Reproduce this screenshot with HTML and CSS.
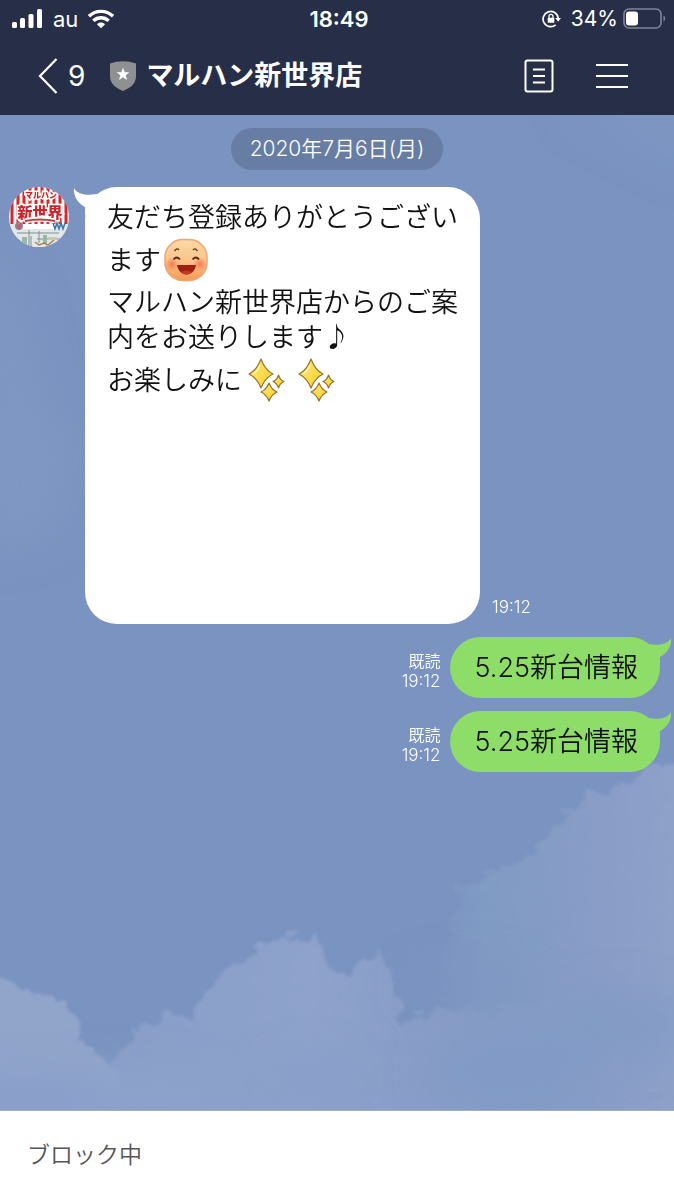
FILE: index.html
```html
<!DOCTYPE html>
<html lang="ja">
<head>
    <meta charset="UTF-8">
    <meta name="viewport" content="width=device-width, initial-scale=1.0">
    <title>マルハン新世界店</title>
    <link rel="stylesheet" href="styles.css">
</head>
<body>

    <header class="top">
        <div class="status">
            <div class="status-left">
                <svg width="31" height="20" viewBox="0 0 31 20" fill="#fff">
                    <rect x="0" y="13" width="5" height="6" rx="1.5"/>
                    <rect x="8" y="9" width="5" height="10" rx="1.5"/>
                    <rect x="16.5" y="5" width="5" height="14" rx="1.5"/>
                    <rect x="25" y="0" width="5" height="19" rx="1.5"/>
                </svg>
                <span>au</span>
                <svg width="26" height="20" viewBox="0 0 26 20" fill="none" stroke="#fff" stroke-width="3.4">
                    <path d="M1 7.2C7.8 .7 18.2 .7 25 7.2"/>
                    <path d="M5.3 11.8C9.8 7.8 16.2 7.8 20.7 11.8"/>
                    <path d="M13 19.3L8.9 15.2C11.3 13 14.7 13 17.1 15.2Z" fill="#fff" stroke="none"/>
                </svg>
            </div>
            <span class="clock">18:49</span>
            <div class="status-right">
                <svg width="19" height="18" viewBox="0 0 19 18" fill="none" stroke="#fff" stroke-width="1.7">
                    <path d="M13.7 14.8A7.6 7.6 0 1 1 16.2 8"/>
                    <path d="M13.2 8H19L16.2 11.8Z" fill="#fff" stroke="none"/>
                    <rect x="5.7" y="7.8" width="6.6" height="5" rx=".6" fill="#fff" stroke="none"/>
                    <path d="M7 8V6.4a2 2 0 0 1 4 0V8" stroke-width="1.3"/>
                </svg>
                <span class="percent">34%</span>
                <svg class="battery" width="43" height="21" viewBox="0 0 43 21">
                    <rect x="1" y="1" width="37" height="19" rx="5" fill="none" stroke="#80859a" stroke-width="1.6"/>
                    <rect x="3" y="3.5" width="12" height="14" rx="3" fill="#fff"/>
                    <path d="M40.5 7.5c2.2 1.4 2.2 4.6 0 6z" fill="#80859a"/>
                </svg>
            </div>
        </div>

        <nav class="nav">
            <a class="back" href="#" aria-label="戻る">
                <svg width="20" height="36" viewBox="0 0 20 36" fill="none" stroke="#fff" stroke-width="2.2">
                    <path d="M18.5 1L2 18L18.5 35"/>
                </svg>
                <span>9</span>
            </a>
            <svg class="shield" width="26" height="30" viewBox="0 0 26 30">
                <path d="M0 2.5Q13 -2 26 2.5V15C26 23 20 27 13 30C6 27 0 23 0 15Z" fill="#8f9091"/>
                <path d="M13 6.6L14.7 11.2L19.4 11.3L15.7 14.2L17 18.9L13 16.2L9 18.9L10.3 14.2L6.6 11.3L11.3 11.2Z" fill="#fff"/>
            </svg>
            <h1>マルハン新世界店</h1>
            <div class="actions">
                <button type="button" aria-label="ノート">
                    <svg width="30" height="34" viewBox="0 0 30 34" fill="none" stroke="#fff" stroke-width="2">
                        <rect x="1.5" y="1.5" width="27" height="31" rx="2"/>
                        <path d="M9 10.5H21M9 17H21M9 23.5H21"/>
                    </svg>
                </button>
                <button type="button" aria-label="メニュー">
                    <svg width="32" height="34" viewBox="0 0 32 34" fill="none" stroke="#fff" stroke-width="2">
                        <path d="M0 6H32M0 17H32M0 28H32"/>
                    </svg>
                </button>
            </div>
        </nav>
    </header>

    <main class="chat">
        <!-- sky wallpaper -->
        <svg class="sky" viewBox="0 0 674 995" preserveAspectRatio="xMidYMax slice" aria-hidden="true">
            <defs>
                <filter id="edge" x="-20%" y="-20%" width="140%" height="140%">
                    <feTurbulence type="fractalNoise" baseFrequency=".05" numOctaves="5" seed="4" result="n"/>
                    <feDisplacementMap in="SourceGraphic" in2="n" scale="30" xChannelSelector="R" yChannelSelector="G"/>
                    <feGaussianBlur stdDeviation="1.8"/>
                </filter>
                <filter id="soft" x="-60%" y="-60%" width="220%" height="220%">
                    <feGaussianBlur stdDeviation="20"/>
                </filter>
                <linearGradient id="right" x1="0" y1="0" x2="1" y2="0">
                    <stop offset="0" stop-color="#829ec6" stop-opacity=".2"/>
                    <stop offset=".15" stop-color="#829ec6" stop-opacity=".7"/>
                    <stop offset=".6" stop-color="#8a9dc7"/>
                    <stop offset="1" stop-color="#91a4ca"/>
                </linearGradient>
                <linearGradient id="mid" x1="0" y1="0" x2="1" y2="0">
                    <stop offset="0" stop-color="#889fc8"/>
                    <stop offset=".35" stop-color="#8ea2cb"/>
                    <stop offset=".6" stop-color="#879dc7" stop-opacity=".9"/>
                    <stop offset="1" stop-color="#859dc7" stop-opacity="0"/>
                </linearGradient>
            </defs>
            <rect width="674" height="995" fill="#7a93c0"/>
            <g filter="url(#soft)">
                <path d="M-20 130L20 170L50 290L80 330L60 420L-20 440Z" fill="#829bc5" opacity=".6"/>
                <path d="M560 -10H700V60Z" fill="#829bc5" opacity=".5"/>
            </g>
            <path filter="url(#edge)" fill="url(#right)" d="M442 1060V860L452 800L462 770L476 765L508 750L535 735L560 705L590 677L610 678L640 660L720 645V1060Z"/>
            <path filter="url(#edge)" fill="url(#mid)" d="M95 1060L110 945L142 910L170 900L192 904L212 868L245 845L268 825L290 824L315 820L328 842L345 862L368 850L382 836L392 862L400 905L435 895L500 898L590 875L720 880V1060Z"/>
            <path filter="url(#edge)" fill="#91a5cb" d="M-40 862L12 870L50 882L72 896L82 928L108 950L122 970V1060H-40Z"/>
            <g filter="url(#soft)">
                <ellipse cx="470" cy="870" rx="60" ry="18" fill="#7d96c2" opacity=".7"/>
                <ellipse cx="510" cy="955" rx="80" ry="32" fill="#7f9ac5" opacity=".8"/>
                <ellipse cx="620" cy="910" rx="70" ry="30" fill="#7f9ac5" opacity=".7"/>
                <ellipse cx="130" cy="990" rx="90" ry="34" fill="#8da2cb"/>
                <ellipse cx="20" cy="985" rx="80" ry="20" fill="#869cc9"/>
                <ellipse cx="310" cy="965" rx="40" ry="20" fill="#829bc6" opacity=".5"/>
            </g>
        </svg>

        <time class="date">2020年7月6日(月)</time>

        <div class="message received">
            <svg class="avatar" width="60" height="60" viewBox="0 0 60 60" role="img" aria-label="マルハン新世界店">
                <defs>
                    <clipPath id="round"><circle cx="30" cy="30" r="30"/></clipPath>
                </defs>
                <g clip-path="url(#round)">
                    <rect width="60" height="60" fill="#fbf3f0"/>
                    <path d="M3 0V37M9 0V37M15 0V37M21 0V37M27 0V37M33 0V37M39 0V37M45 0V37M51 0V37M57 0V37" stroke="#d4282d" stroke-width="3"/>
                    <text x="32" y="11" class="avatar-sub" text-anchor="middle">マルハン</text>
                    <text x="31" y="31" class="avatar-name" text-anchor="middle">新世界</text>
                    <path d="M16 34Q31 30 46 34" fill="none" stroke="#fff" stroke-width="5"/>
                    <path d="M16 34Q31 31 46 34" fill="none" stroke="#c43a3c" stroke-width="2"/>
                    <rect y="37" width="60" height="23" fill="#e4e7e8"/>
                    <path d="M14 37H46V42H14Z" fill="#fff"/>
                    <path d="M44 36l2 6 2-6 2 6 2-6 2 6 2-6" fill="none" stroke="#3d78ad" stroke-width="1.5"/>
                    <circle cx="10" cy="39" r="4" fill="#7b8fae"/>
                    <path d="M6 39l7-3-2 7z" fill="#ca5960"/>
                    <path d="M20 43V60M22 49V60M30 44V56M8 46H50M28 52H52" stroke="#7d8f94" stroke-width="1"/>
                    <path d="M13 50h5v8h-5zM34 48h4v8h-4z" fill="#95b9a5"/>
                    <path d="M26 55l4 3 5-2 4 2 6-5" stroke="#a58544" stroke-width="1.5" fill="none"/>
                    <path d="M39 50h9v3h-9z" fill="#c5cbb7"/>
                </g>
            </svg>
            <div class="bubble">
                <svg class="tail" width="30" height="28" viewBox="0 0 30 28" fill="#fff">
                    <path d="M1 1C4 7 12 9 24 7L30 28H12V20C6 17 0 10 1 1Z"/>
                </svg>
                <p>友だち登録ありがとうございます<svg class="emoji" width="44" height="44" viewBox="0 0 44 44" role="img" aria-label="笑顔">
                    <defs>
                        <linearGradient id="skin" x1="0" y1="0" x2="0" y2="1">
                            <stop offset="0" stop-color="#fbd9a5"/>
                            <stop offset=".5" stop-color="#fac58c"/>
                            <stop offset="1" stop-color="#f59a55"/>
                        </linearGradient>
                        <radialGradient id="cheek">
                            <stop offset="0" stop-color="#f0674b" stop-opacity=".75"/>
                            <stop offset="1" stop-color="#f0674b" stop-opacity="0"/>
                        </radialGradient>
                    </defs>
                    <rect x="1" y="1.5" width="42" height="41" rx="18" fill="url(#skin)" stroke="#f3a273" stroke-width="1.5"/>
                    <circle cx="8" cy="26" r="7" fill="url(#cheek)"/>
                    <circle cx="36" cy="26" r="7" fill="url(#cheek)"/>
                    <path d="M10.5 13Q13 9.500 15 12M29 12Q31 9.500 33.5 13" fill="none" stroke="#6b3a16" stroke-width="1.3"/>
                    <path d="M9.5 21.5Q12.5 17.500 16 21.5M28.5 21.5Q32 17.500 35 21.5" fill="none" stroke="#5c2c10" stroke-width="1.8"/>
                    <path d="M13 27H32C31 33 27 36.5 22.5 36.5S14 33 13 27Z" fill="#9d1f12"/>
                    <path d="M17 34Q22.5 31 28 34Q26 36.5 22.5 36.5T17 34Z" fill="#c03a25"/>
                </svg><br>
                マルハン新世界店からのご案内をお送りします♪<br>
                お楽しみに<svg class="emoji sparkle" width="44" height="44" viewBox="0 0 44 44" role="img" aria-label="キラキラ">
                    <defs>
                        <linearGradient id="gold" x1="0" y1="0" x2="1" y2="1">
                            <stop offset="0" stop-color="#ffe878"/>
                            <stop offset="1" stop-color="#f7cf28"/>
                        </linearGradient>
                    </defs>
                    <g fill="url(#gold)" stroke="#94702c" stroke-width="1.2" stroke-linejoin="round">
                        <path d="M16 1Q20 12 28 16Q20 20 16 30Q12 20 4 16Q12 12 16 1Z"/>
                        <path d="M33.500 17Q35 22 39 23.500Q35 25 33.500 30Q32 25 28 23.500Q32 22 33.500 17Z"/>
                        <path d="M24 25Q26.500 31.500 32 34Q26.500 36.500 24 43Q21.500 36.500 16 34Q21.500 31.500 24 25Z"/>
                    </g>
                    <path d="M15 7Q12 14 8 16" fill="none" stroke="#fff6bb" stroke-width="1.5"/>
                </svg><svg class="emoji sparkle" width="44" height="44" viewBox="0 0 44 44" role="img" aria-label="キラキラ">
                    <g fill="url(#gold)" stroke="#94702c" stroke-width="1.2" stroke-linejoin="round">
                        <path d="M16 1Q20 12 28 16Q20 20 16 30Q12 20 4 16Q12 12 16 1Z"/>
                        <path d="M33.500 17Q35 22 39 23.500Q35 25 33.500 30Q32 25 28 23.500Q32 22 33.500 17Z"/>
                        <path d="M24 25Q26.500 31.500 32 34Q26.500 36.500 24 43Q21.500 36.500 16 34Q21.500 31.500 24 25Z"/>
                    </g>
                    <path d="M15 7Q12 14 8 16" fill="none" stroke="#fff6bb" stroke-width="1.5"/>
                </svg></p>
            </div>
            <div class="meta"><time>19:12</time></div>
        </div>

        <div class="message sent">
            <div class="meta"><span>既読</span><time>19:12</time></div>
            <div class="bubble">
                <svg class="tail" width="30" height="28" viewBox="0 0 30 28" fill="#8edd69">
                    <path d="M29 1C26 7 18 9 6 7L0 28H18V20C24 17 30 10 29 1Z"/>
                </svg>
                <p>5.25新台情報</p>
            </div>
        </div>

        <div class="message sent">
            <div class="meta"><span>既読</span><time>19:12</time></div>
            <div class="bubble">
                <svg class="tail" width="30" height="28" viewBox="0 0 30 28" fill="#8edd69">
                    <path d="M29 1C26 7 18 9 6 7L0 28H18V20C24 17 30 10 29 1Z"/>
                </svg>
                <p>5.25新台情報</p>
            </div>
        </div>
    </main>

    <footer class="blocked">ブロック中</footer>

</body>
</html>
```

FILE: styles.css
```css
* {
    box-sizing: border-box;
}
body {
    margin: 0;
    min-height: 100vh;
    display: flex;
    flex-direction: column;
    font-family: Inter, "Noto Sans CJK JP", sans-serif;
    color: #111;
}
svg {
    display: block;
    flex-shrink: 0;
}
p, h1 {
    margin: 0;
}

/* header */
.top {
    background-color: #272e48;
    color: #fff;
}
.status {
    display: grid;
    grid-template-columns: 1fr auto 1fr;
    align-items: center;
    height: 37px;
    padding: 0 8px 0 12px;
    font-size: 22px;
}
.status-left {
    display: flex;
    align-items: center;
    gap: 10px;
}
.clock {
    font-weight: 600;
}
.status-right {
    display: flex;
    align-items: center;
    justify-content: flex-end;
    gap: 10px;
}
.percent {
    font-size: 21px;
}
.battery {
    margin-left: -5px;
}
.nav {
    display: flex;
    align-items: center;
    height: 78px;
    padding: 0 46px 0 38px;
}
.back {
    display: flex;
    align-items: center;
    gap: 10px;
    color: #fff;
    font-size: 28px;
    text-decoration: none;
}
.shield {
    margin: 0 10px 0 25px;
}
h1 {
    font-size: 27px;
    line-height: 36px;
    font-weight: 700;
}
.actions {
    display: flex;
    gap: 42px;
    margin-left: auto;
}
.actions button {
    padding: 0;
    border: none;
    background: none;
    cursor: pointer;
}

/* chat */
.chat {
    position: relative;
    flex: 1;
    display: flex;
    flex-direction: column;
    gap: 13px;
    padding: 13px 9px;
    overflow: hidden;
    isolation: isolate;
}
.sky {
    position: absolute;
    inset: 0;
    width: 100%;
    height: 100%;
    z-index: -1;
}
.date {
    align-self: center;
    margin-bottom: 4px;
    padding: 0 19px;
    border-radius: 21px;
    background-color: #677da3;
    color: #fff;
    font-size: 21px;
    font-weight: 350;
    line-height: 42px;
}
.message {
    display: flex;
}
.bubble {
    position: relative;
    border-radius: 32px;
    font-size: 27px;
    line-height: 35px;
}
.received .bubble {
    width: 395px;
    min-height: 437px;
    margin: 0 12px 0 16px;
    padding: 13px 22px;
    background-color: #fff;
}
.sent {
    justify-content: flex-end;
    padding-right: 5px;
}
.sent .bubble {
    margin-left: 10px;
    padding: 13px 22px 13px 24px;
    background-color: #8edd69;
}
.tail {
    position: absolute;
    top: 0;
}
.received .tail {
    left: -12px;
}
.sent .tail {
    right: -12px;
}
.bubble p {
    position: relative;
    font-weight: 350;
}
.meta {
    display: flex;
    flex-direction: column;
    justify-content: flex-end;
    align-items: flex-end;
    padding-bottom: 7px;
    color: #fff;
    font-size: 16px;
    font-weight: 350;
    line-height: 20px;
}
.meta time {
    font-size: 17px;
}
.emoji {
    display: inline-block;
    margin: 3px;
    vertical-align: -15px;
}
.avatar-sub, .avatar-name {
    fill: #c9252b;
    stroke: #fff;
    stroke-width: 3px;
    paint-order: stroke;
    font-family: "Noto Sans CJK JP", sans-serif;
    font-weight: 900;
}
.avatar-sub {
    font-size: 8px;
}
.avatar-name {
    font-size: 15px;
}

/* footer */
.blocked {
    padding: 28px 27px;
    border-top: 1px solid #a5adba;
    background-color: #fff;
    color: #555;
    font-size: 23px;
    font-weight: 350;
    line-height: 33px;
}
```
